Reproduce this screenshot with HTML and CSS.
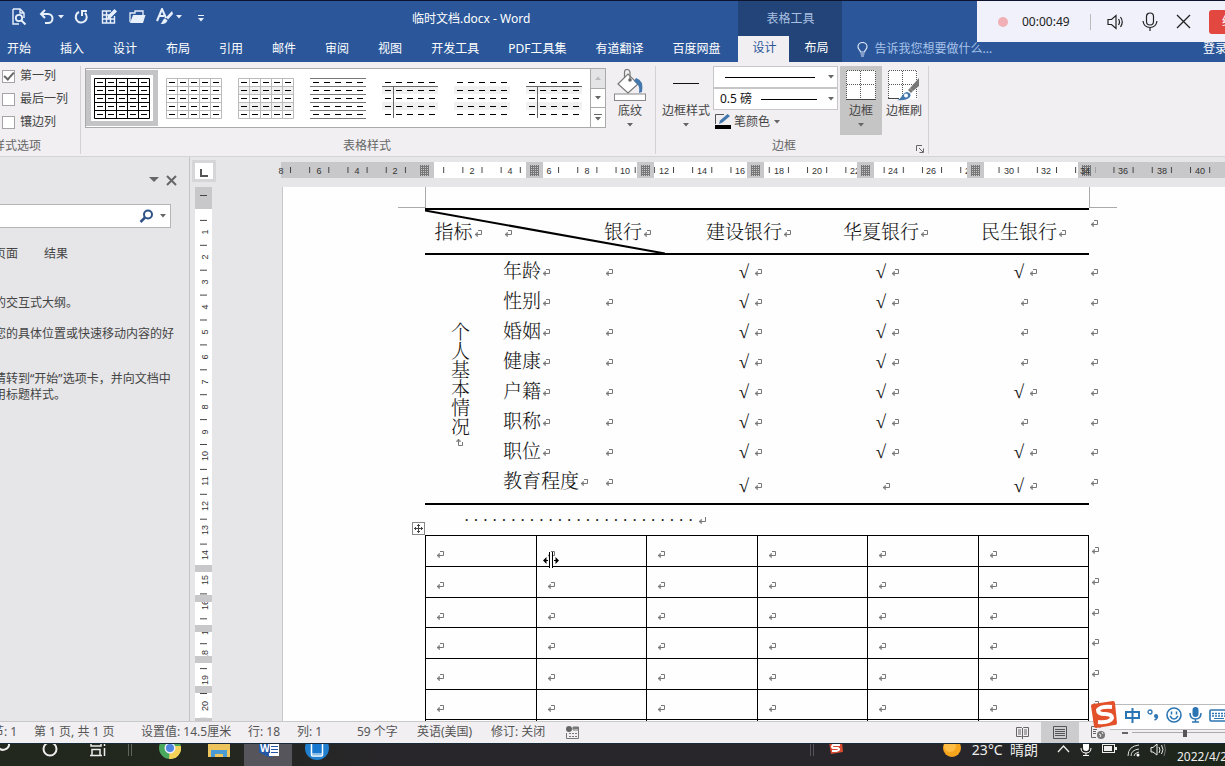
FILE: index.html
```html
<!DOCTYPE html>
<html lang="zh-CN">
<head>
<meta charset="utf-8">
<title>临时文档.docx - Word</title>
<link rel="stylesheet" href="styles.css">
</head>
<body>
<svg class="defs" aria-hidden="true">
  <symbol id="pm" viewBox="0 0 8 8"><path d="M4 .5h3.5v4H1M3.2 2v5M2.2 3v3" fill="none" stroke="#777"/></symbol>
  <symbol id="enter" viewBox="0 0 8 8"><path d="M7.5 0v4.5H1M3.2 2v5M2.2 3v3" fill="none" stroke="#777"/></symbol>
  <symbol id="dashes" viewBox="0 0 56 41"><path d="M3 4.5h53M3 12.5h53M3 20.5h53M3 28.5h53M3 36.5h53" stroke="#000" stroke-dasharray="6 5" fill="none" stroke-width="1"/></symbol>
  <symbol id="gridlines" viewBox="0 0 56 41"><path d="M.5 .5h55v40H.5zM0 8.5h56M0 16.5h56M0 24.5h56M0 32.5h56M11.5 0v41M22.5 0v41M33.5 0v41M44.5 0v41" fill="none" stroke="currentColor"/></symbol>
  <symbol id="down" viewBox="0 0 6 4"><path d="M0 0h6L3 3.5z" fill="currentColor"/></symbol>
</svg>

<header class="titlebar">
  <div class="main-head">
    <div class="title-row">
      <div class="qat">
        <button aria-label="打印预览"><svg width="16" height="18" viewBox="0 0 16 18"><path d="M2 1h7l4 4v5M2 1v15h6M9 1v4h4" fill="none" stroke="#e8f0fb" stroke-width="1.4"/><circle cx="8" cy="10" r="3.2" fill="none" stroke="#e8f0fb" stroke-width="1.8"/><path d="M10.500 12.500l4 4" stroke="#e8f0fb" stroke-width="2"/></svg></button>
        <button aria-label="撤消" class="undo"><svg width="16" height="16" viewBox="0 0 16 16"><path d="M6 1L2 5l4 4M2 5h7a4 4 0 0 1 0 9H6" fill="none" stroke="#e8f0fb" stroke-width="2"/></svg><svg class="caret"><use href="#down"/></svg></button>
        <button aria-label="重复"><svg width="15" height="16" viewBox="0 0 15 16"><path d="M5 3a5.500 5.500 0 1 0 6 1M8 7V2h5" fill="none" stroke="#e8f0fb" stroke-width="2"/></svg></button>
        <button aria-label="绘制表格"><svg width="16" height="16" viewBox="0 0 16 16"><path d="M10 2H1.500v12h12V7M1.500 6h7M1.500 10h12M5.500 2v12M9.500 9v5" fill="none" stroke="#e8f0fb" stroke-width="1.400"/><path d="M6 10.500l1-4L13.500 0 16 2.500 9.500 9z" fill="#e8f0fb"/></svg></button>
        <button aria-label="打开"><svg width="17" height="16" viewBox="0 0 17 16"><path d="M1 13V4h5V2h8v5" fill="none" stroke="#e8f0fb" stroke-width="1.300"/><path d="M4 6h12.500L14 14H1z" fill="#e8f0fb"/></svg></button>
        <button aria-label="格式" class="style-brush"><svg width="17" height="17" viewBox="0 0 17 17"><path d="M1 13L6 1l4 9M3 8h5" fill="none" stroke="#e8f0fb" stroke-width="2"/><path d="M16 3l-6 6.500 2 2L17 6zM9 10.500l2.500 2c-1 3-4 3.500-7 3.500 2-1 2-5 4.500-5.500z" fill="#e8f0fb"/></svg><svg class="caret"><use href="#down"/></svg></button>
        <button aria-label="自定义快速访问工具栏"><svg width="6" height="8" viewBox="0 0 6 8"><path d="M0 .5h6" stroke="#e8f0fb"/><path d="M0 3h6L3 6.500z" fill="#e8f0fb"/></svg></button>
      </div>
      <h1>临时文档.docx - Word</h1>
    </div>
    <nav class="tabs">
      <a href="#">开始</a><a href="#">插入</a><a href="#">设计</a><a href="#">布局</a><a href="#">引用</a><a href="#">邮件</a><a href="#">审阅</a><a href="#">视图</a><a href="#">开发工具</a><a href="#">PDF工具集</a><a href="#">有道翻译</a><a href="#">百度网盘</a>
    </nav>
  </div>
  <div class="context">
    <div class="context-title">表格工具</div>
    <nav class="context-tabs"><a href="#" class="active">设计</a><a href="#">布局</a></nav>
  </div>
  <div class="tell">
    <a href="#" class="ask"><svg width="11" height="15" viewBox="0 0 11 15"><path d="M3.500 10C3.500 8 1 7.500 1 4.800a4.500 4.300 0 0 1 9 0C10 7.500 7.500 8 7.500 10zM3.500 12h4M4 14h3" fill="none" stroke="#dbe7f8" stroke-width="1.200"/></svg>告诉我您想要做什么...</a>
    <a href="#" class="login">登录</a>
  </div>
</header>

<aside class="recorder">
  <span class="rec-dot"></span><time>00:00:49</time><span class="rec-sep"></span>
  <button aria-label="声音"><svg width="17" height="16" viewBox="0 0 17 16"><path d="M1 5.500h3.500L9 1.500v13L4.500 10.500H1zM11.500 5q2 3 0 6M13.500 3q3.500 5 0 10" fill="none" stroke="#222" stroke-width="1.200"/></svg></button>
  <button aria-label="麦克风"><svg width="16" height="19" viewBox="0 0 16 19"><rect x="4.500" y="1" width="7" height="12" rx="3.500" fill="none" stroke="#222" stroke-width="1.200"/><path d="M1 9q1 6.500 7 6.500T15 9M8 15.500V19" fill="none" stroke="#222" stroke-width="1.200"/></svg></button>
  <button aria-label="关闭"><svg width="15" height="15" viewBox="0 0 15 15"><path d="M1 1l13 13M14 1L1 14" stroke="#222" stroke-width="1.300"/></svg></button>
  <button class="rec-stop">结束</button>
</aside>

<section class="ribbon">
  <div class="group options">
    <div class="group-body checks">
      <label><input type="checkbox" checked>第一列</label>
      <label><input type="checkbox">最后一列</label>
      <label><input type="checkbox">镶边列</label>
    </div>
    <div class="group-label">样式选项</div>
  </div>
  <div class="group styles">
    <div class="group-body">
      <div class="gallery">
        <button class="thumb selected" aria-label="网格型"><svg><use href="#gridlines"/><use href="#dashes"/></svg></button>
        <button class="thumb pale" aria-label="网格型浅色"><svg><use href="#gridlines"/><use href="#dashes"/></svg></button>
        <button class="thumb pale" aria-label="普通表格 1"><svg><path d="M0 8h56v8H0zM0 24h56v8H0z" fill="#f1f1f1"/><use href="#gridlines"/><use href="#dashes"/></svg></button>
        <button class="thumb" aria-label="普通表格 2"><svg><path d="M0 .5h56M0 8.500h56M0 16.500h56M0 24.500h56M0 32.500h56M0 40.500h56" stroke="#777"/><use href="#dashes"/></svg></button>
        <button class="thumb" aria-label="普通表格 3"><svg><path d="M0 9h56v7H0zM0 24h56v8H0z" fill="#f1f1f1"/><path d="M0 8.500h56M11.500 9v31" stroke="#666"/><use href="#dashes"/></svg></button>
        <button class="thumb" aria-label="普通表格 4"><svg><path d="M0 8h56v8H0zM0 24h56v8H0z" fill="#f1f1f1"/><use href="#dashes"/></svg></button>
        <button class="thumb" aria-label="普通表格 5"><svg><path d="M0 9h56v7H0zM0 24h56v8H0z" fill="#f1f1f1"/><path d="M0 8.500h56M11.500 9v31" stroke="#666"/><use href="#dashes"/></svg></button>
        <div class="gallery-nav">
          <button disabled aria-label="上一行"><svg class="caret up"><use href="#down"/></svg></button>
          <button aria-label="下一行"><svg class="caret"><use href="#down"/></svg></button>
          <button aria-label="其他"><svg width="8" height="7" viewBox="0 0 8 7"><path d="M0 .5h8" stroke="#666"/><path d="M1 3h6L4 6.500z" fill="#666"/></svg></button>
        </div>
      </div>
      <button class="big shading">
        <svg width="32" height="32" viewBox="0 0 32 32"><path d="M4 15L14 5l10 10-10 9z" fill="#fff" stroke="#777" stroke-width="1.200"/><path d="M10.500 9V3q0-2.500 2.500-2.500T16 3v8" fill="none" stroke="#777" stroke-width="1.200"/><circle cx="16" cy="11" r="1.800" fill="#666"/><path d="M22 9q8 2 6 14l-3 1q1-7-2-9l-3-3z" fill="#4478ad"/><rect x=".5" y="25" width="31" height="6.500" fill="#fff" stroke="#888"/></svg>
        <span>底纹</span><svg class="caret"><use href="#down"/></svg>
      </button>
    </div>
    <div class="group-label">表格样式</div>
  </div>
  <div class="group borders">
    <div class="group-body">
      <button class="big border-style"><svg width="26" height="32" viewBox="0 0 26 32"><path d="M0 14.500h26" stroke="#111"/></svg><span>边框样式</span><svg class="caret"><use href="#down"/></svg></button>
      <div class="pen">
        <div class="combo"><select aria-label="笔样式"><option></option></select><span class="rule long"></span><svg class="caret"><use href="#down"/></svg></div>
        <div class="combo"><select aria-label="笔划粗细"><option>0.5 磅</option></select><span class="rule"></span><svg class="caret"><use href="#down"/></svg></div>
        <button class="pen-color"><svg width="16" height="16" viewBox="0 0 16 16"><path d="M9 .5H.5V10" fill="none" stroke="#555"/><path d="M4 10l1-3.500L12.500 0 15 2 7.500 8.500z" fill="#4478ad"/><rect y="11" width="16" height="4" fill="#000"/></svg>笔颜色<svg class="caret"><use href="#down"/></svg></button>
      </div>
      <button class="big pressed"><svg width="30" height="30" viewBox="0 0 30 30"><rect x=".5" y=".5" width="29" height="29" fill="#fff"/><path d="M1 .5h28M1 14.500h28M.5 1v28M14.500 1v28M29.500 1v28" stroke="#555" stroke-dasharray="1 1" fill="none"/><path d="M0 29.500h30" stroke="#444"/></svg><span>边框</span><svg class="caret"><use href="#down"/></svg></button>
      <button class="big painter"><svg width="32" height="30" viewBox="0 0 32 30"><rect x=".5" y=".5" width="29" height="29" fill="#fff"/><path d="M1 .5h28M1 14.500h28M.5 1v28M14.500 1v28M28.500 1v28" stroke="#555" stroke-dasharray="1 1" fill="none"/><path d="M0 28.500h11" stroke="#444"/><path d="M31 8v8l-6 5-3-3z" fill="#777"/><path d="M20 20l2-2 3 3-2 2z" fill="#777"/><path d="M9 30c5-1 5-7 10-8q5 1 3 5-4 4-13 3z" fill="#4478ad"/><circle cx="18" cy="25.500" r="2" fill="#fff"/></svg><span>边框刷</span></button>
    </div>
    <div class="group-label">边框<button class="launcher" aria-label="边框和底纹"><svg width="8" height="8" viewBox="0 0 8 8"><path d="M.5 6V.5H6M3 3l4 4M7.500 3.500v4h-4" fill="none" stroke="#666"/></svg></button></div>
  </div>
</section>

<main class="workspace">
  <aside class="pane">
    <div class="pane-tools">
      <button aria-label="任务窗格选项"><svg width="10" height="6" viewBox="0 0 10 6"><path d="M0 0h10L5 5z" fill="#666"/></svg></button>
      <button aria-label="关闭"><svg width="11" height="11" viewBox="0 0 11 11"><path d="M1 1l9 9M10 1l-9 9" stroke="#666" stroke-width="2"/></svg></button>
    </div>
    <div class="search"><input type="text" aria-label="搜索文档"><svg width="15" height="15" viewBox="0 0 15 15"><circle cx="9" cy="5.500" r="4" fill="none" stroke="#2f5287" stroke-width="2"/><path d="M6 8.500L1.500 13" stroke="#2f5287" stroke-width="2.500"/></svg><svg class="caret"><use href="#down"/></svg></div>
    <div class="pane-text">
      <nav><a href="#">页面</a><a href="#">结果</a></nav>
      <p>的交互式大纲。</p>
      <p>您的具体位置或快速移动内容的好</p>
      <p>请转到<span class="latin">“</span>开始<span class="latin">”</span>选项卡，并向文档中<br>用标题样式。</p>
    </div>
  </aside>
  <div class="editor">
    <div class="top-ruler">
      <button class="tab-kind" aria-label="左对齐制表符"><svg width="8" height="8" viewBox="0 0 8 8"><path d="M1 0v7h7" fill="none" stroke="#555" stroke-width="2"/></svg></button>
      <svg class="hruler" height="16">
        <defs>
          <pattern id="tick" x="9" width="19.150" height="16" patternUnits="userSpaceOnUse"><path d="M.5 5v6" stroke="#444"/></pattern>
          <pattern id="mesh" width="2" height="2" patternUnits="userSpaceOnUse"><path d="M0 .5h2M.5 0v2" stroke="#777"/></pattern>
          <g id="stop"><rect x="-8" width="17" height="16" fill="#c8c7c9"/><rect x="-4" y="3" width="9" height="11" fill="url(#mesh)"/></g>
        </defs>
        <rect width="100%" height="16" fill="#c8c7c9"/>
        <rect x="153" width="645" height="16" fill="#fff"/>
        <rect x="9" width="934" height="16" fill="url(#tick)"/>
        <g class="nums">
          <text x="0" y="12">8</text><text x="38" y="12">6</text><text x="76" y="12">4</text><text x="114" y="12">2</text><text x="191" y="12">2</text><text x="229" y="12">4</text><text x="268" y="12">6</text><text x="306" y="12">8</text><text x="344" y="12">10</text><text x="383" y="12">12</text><text x="421" y="12">14</text><text x="459" y="12">16</text><text x="498" y="12">18</text><text x="536" y="12">20</text><text x="574" y="12">22</text><text x="612" y="12">24</text><text x="650" y="12">26</text><text x="689" y="12">28</text><text x="728" y="12">30</text><text x="765" y="12">32</text>
        </g>
        <use href="#stop" x="143"/><use href="#stop" x="253"/><use href="#stop" x="364"/><use href="#stop" x="474"/><use href="#stop" x="584"/><use href="#stop" x="694"/><use href="#stop" x="805"/>
        <g class="nums"><text x="804" y="12">34</text><text x="842" y="12">36</text><text x="881" y="12">38</text><text x="919" y="12">40</text></g>
      </svg>
    </div>
    <div class="canvas">
      <svg class="vruler" width="17" height="534">
        <defs><pattern id="vtick" y="8" width="17" height="24.900" patternUnits="userSpaceOnUse"><path d="M5 .5h7" stroke="#444"/></pattern></defs>
        <rect width="17" height="534" fill="#fff"/><rect width="17" height="22" fill="#c8c7c9"/>
        <rect y="6" width="17" height="528" fill="url(#vtick)"/>
        <g class="nums">
          <text transform="translate(13 45) rotate(-90)">1</text><text transform="translate(13 70) rotate(-90)">2</text><text transform="translate(13 95) rotate(-90)">3</text><text transform="translate(13 120) rotate(-90)">4</text><text transform="translate(13 145) rotate(-90)">5</text><text transform="translate(13 170) rotate(-90)">6</text><text transform="translate(13 195) rotate(-90)">7</text><text transform="translate(13 220) rotate(-90)">8</text><text transform="translate(13 245) rotate(-90)">9</text><text transform="translate(13 269) rotate(-90)">10</text><text transform="translate(13 294) rotate(-90)">11</text><text transform="translate(13 319) rotate(-90)">12</text><text transform="translate(13 343) rotate(-90)">13</text><text transform="translate(13 368) rotate(-90)">14</text><text transform="translate(13 393) rotate(-90)">15</text><text transform="translate(13 418) rotate(-90)">16</text><text transform="translate(13 443) rotate(-90)">17</text><text transform="translate(13 468) rotate(-90)">18</text><text transform="translate(13 493) rotate(-90)">19</text><text transform="translate(13 519) rotate(-90)">20</text>
        </g>
        <path d="M0 378h17v7H0zM0 408h17v7H0zM0 438h17v7H0zM0 469h17v7H0zM0 499h17v7H0zM0 531h17v3H0z" fill="#c8c7c9"/>
      </svg>
      <article class="page">
        <div class="crops"><span class="crop left"></span><span class="crop right"></span></div>
        <table class="banks">
          <colgroup><col class="c0"><col class="c1"><col class="c2"><col class="c3"><col class="c3"><col class="c5"><col class="cend"></colgroup>
          <tr class="head"><th class="corner"><svg class="slash" width="240" height="45" viewBox="0 0 240 45"><path d="M0 1.500L240 44.500" stroke="#000" stroke-width="2"/></svg>指标<svg class="pm"><use href="#pm"/></svg></th><th class="item"><svg class="pm"><use href="#pm"/></svg></th><th class="blank">银行<svg class="pm"><use href="#pm"/></svg></th><th>建设银行<svg class="pm"><use href="#pm"/></svg></th><th>华夏银行<svg class="pm"><use href="#pm"/></svg></th><th>民生银行<svg class="pm"><use href="#pm"/></svg></th><td class="end"><svg class="pm"><use href="#pm"/></svg></td></tr>
          <tr><th rowspan="8" class="side"><span>个人基本情况<svg class="pm turned"><use href="#pm"/></svg></span></th><th class="item">年龄<svg class="pm"><use href="#pm"/></svg></th><td class="blank"><svg class="pm"><use href="#pm"/></svg></td><td><b>√</b><svg class="pm"><use href="#pm"/></svg></td><td><b>√</b><svg class="pm"><use href="#pm"/></svg></td><td><b>√</b><svg class="pm"><use href="#pm"/></svg></td><td class="end"><svg class="pm"><use href="#pm"/></svg></td></tr>
          <tr><th class="item">性别<svg class="pm"><use href="#pm"/></svg></th><td class="blank"><svg class="pm"><use href="#pm"/></svg></td><td><b>√</b><svg class="pm"><use href="#pm"/></svg></td><td><b>√</b><svg class="pm"><use href="#pm"/></svg></td><td><svg class="pm"><use href="#pm"/></svg></td><td class="end"><svg class="pm"><use href="#pm"/></svg></td></tr>
          <tr><th class="item">婚姻<svg class="pm"><use href="#pm"/></svg></th><td class="blank"><svg class="pm"><use href="#pm"/></svg></td><td><b>√</b><svg class="pm"><use href="#pm"/></svg></td><td><b>√</b><svg class="pm"><use href="#pm"/></svg></td><td><svg class="pm"><use href="#pm"/></svg></td><td class="end"><svg class="pm"><use href="#pm"/></svg></td></tr>
          <tr><th class="item">健康<svg class="pm"><use href="#pm"/></svg></th><td class="blank"><svg class="pm"><use href="#pm"/></svg></td><td><b>√</b><svg class="pm"><use href="#pm"/></svg></td><td><b>√</b><svg class="pm"><use href="#pm"/></svg></td><td><svg class="pm"><use href="#pm"/></svg></td><td class="end"><svg class="pm"><use href="#pm"/></svg></td></tr>
          <tr><th class="item">户籍<svg class="pm"><use href="#pm"/></svg></th><td class="blank"><svg class="pm"><use href="#pm"/></svg></td><td><b>√</b><svg class="pm"><use href="#pm"/></svg></td><td><b>√</b><svg class="pm"><use href="#pm"/></svg></td><td><b>√</b><svg class="pm"><use href="#pm"/></svg></td><td class="end"><svg class="pm"><use href="#pm"/></svg></td></tr>
          <tr><th class="item">职称<svg class="pm"><use href="#pm"/></svg></th><td class="blank"><svg class="pm"><use href="#pm"/></svg></td><td><b>√</b><svg class="pm"><use href="#pm"/></svg></td><td><b>√</b><svg class="pm"><use href="#pm"/></svg></td><td><svg class="pm"><use href="#pm"/></svg></td><td class="end"><svg class="pm"><use href="#pm"/></svg></td></tr>
          <tr><th class="item">职位<svg class="pm"><use href="#pm"/></svg></th><td class="blank"><svg class="pm"><use href="#pm"/></svg></td><td><b>√</b><svg class="pm"><use href="#pm"/></svg></td><td><b>√</b><svg class="pm"><use href="#pm"/></svg></td><td><b>√</b><svg class="pm"><use href="#pm"/></svg></td><td class="end"><svg class="pm"><use href="#pm"/></svg></td></tr>
          <tr class="last"><th class="item">教育程度<svg class="pm"><use href="#pm"/></svg></th><td class="blank"><svg class="pm"><use href="#pm"/></svg></td><td><b>√</b><svg class="pm"><use href="#pm"/></svg></td><td><svg class="pm"><use href="#pm"/></svg></td><td><b>√</b><svg class="pm"><use href="#pm"/></svg></td><td class="end"><svg class="pm"><use href="#pm"/></svg></td></tr>
        </table>
        <p class="spaces">· · · · · · · · · · · · · · · · · · · · · · · · · <svg class="pm"><use href="#enter"/></svg></p>
        <div class="grid-wrap">
          <svg class="mover" width="13" height="13" viewBox="0 0 13 13"><rect x=".5" y=".5" width="12" height="12" fill="#fff" stroke="#888"/><path d="M6.500 2v9M2 6.500h9M5 3.500h3M5 9.500h3M3.500 5v3M9.500 5v3" stroke="#444"/></svg>
          <svg class="cursor" width="16" height="17" viewBox="0 0 16 17"><path d="M8 0v17" stroke="#fff" stroke-width="2"/><path d="M6.500 0v16M9.500 0v16M1 8.500h4M11 8.500h4" stroke="#000"/><path d="M0 8.500L3.500 5v7zM16 8.500L12.500 5v7z" fill="#000"/></svg>
          <table class="blank-grid">
            <tr><td><svg class="pm"><use href="#pm"/></svg></td><td><svg class="pm"><use href="#pm"/></svg></td><td><svg class="pm"><use href="#pm"/></svg></td><td><svg class="pm"><use href="#pm"/></svg></td><td><svg class="pm"><use href="#pm"/></svg></td><td><svg class="pm"><use href="#pm"/></svg></td><td class="end"><svg class="pm"><use href="#pm"/></svg></td></tr>
            <tr><td><svg class="pm"><use href="#pm"/></svg></td><td><svg class="pm"><use href="#pm"/></svg></td><td><svg class="pm"><use href="#pm"/></svg></td><td><svg class="pm"><use href="#pm"/></svg></td><td><svg class="pm"><use href="#pm"/></svg></td><td><svg class="pm"><use href="#pm"/></svg></td><td class="end"><svg class="pm"><use href="#pm"/></svg></td></tr>
            <tr><td><svg class="pm"><use href="#pm"/></svg></td><td><svg class="pm"><use href="#pm"/></svg></td><td><svg class="pm"><use href="#pm"/></svg></td><td><svg class="pm"><use href="#pm"/></svg></td><td><svg class="pm"><use href="#pm"/></svg></td><td><svg class="pm"><use href="#pm"/></svg></td><td class="end"><svg class="pm"><use href="#pm"/></svg></td></tr>
            <tr><td><svg class="pm"><use href="#pm"/></svg></td><td><svg class="pm"><use href="#pm"/></svg></td><td><svg class="pm"><use href="#pm"/></svg></td><td><svg class="pm"><use href="#pm"/></svg></td><td><svg class="pm"><use href="#pm"/></svg></td><td><svg class="pm"><use href="#pm"/></svg></td><td class="end"><svg class="pm"><use href="#pm"/></svg></td></tr>
            <tr><td><svg class="pm"><use href="#pm"/></svg></td><td><svg class="pm"><use href="#pm"/></svg></td><td><svg class="pm"><use href="#pm"/></svg></td><td><svg class="pm"><use href="#pm"/></svg></td><td><svg class="pm"><use href="#pm"/></svg></td><td><svg class="pm"><use href="#pm"/></svg></td><td class="end"><svg class="pm"><use href="#pm"/></svg></td></tr>
            <tr><td><svg class="pm"><use href="#pm"/></svg></td><td><svg class="pm"><use href="#pm"/></svg></td><td><svg class="pm"><use href="#pm"/></svg></td><td><svg class="pm"><use href="#pm"/></svg></td><td><svg class="pm"><use href="#pm"/></svg></td><td><svg class="pm"><use href="#pm"/></svg></td><td class="end"><svg class="pm"><use href="#pm"/></svg></td></tr>
            <tr><td></td><td></td><td></td><td></td><td></td><td></td><td class="end"></td></tr>
          </table>
        </div>
      </article>
    </div>
  </div>
</main>

<footer class="status">
  <span class="s-sec">节: 1</span><span class="s-page">第 1 页, 共 1 页</span><span class="s-at">设置值: 14.5厘米</span><span class="s-line">行: 18</span><span class="s-col">列: 1</span><span class="s-words">59 个字</span><span class="s-lang">英语(美国)</span><span class="s-track">修订: 关闭</span>
  <svg width="13" height="13" viewBox="0 0 13 13"><circle cx="3" cy="3" r="3" fill="#666"/><path d="M7 1h5.500v3H7zM.5 7v5.500h12V4" fill="none" stroke="#777"/><path d="M7 2h5" stroke="#777" stroke-width="2"/><path d="M3 7.500h8M3 10.500h8" stroke="#777" stroke-dasharray="2 1"/></svg>
  <div class="views">
    <button aria-label="阅读视图"><svg width="13" height="13" viewBox="0 0 13 13"><path d="M.5 1.500h5l1 1 1-1h5v9h-5l-1 1-1-1h-5zM6.500 2v11M2 4h3M2 6h3M2 8h3M8 4h3M8 6h3M8 8h3" fill="none" stroke="#666"/></svg></button>
    <button class="current" aria-label="页面视图"><svg width="14" height="13" viewBox="0 0 14 13"><path d="M.5 .5h13v12H.5zM2 3.500h10M2 5.500h10M2 7.500h10M2 9.500h10" fill="none" stroke="#555"/></svg></button>
    <button aria-label="Web 版式视图"><svg width="14" height="14" viewBox="0 0 14 14"><path d="M9 2V.5H.5v11H5M2 3.500h4M2 5.500h3M2 7.500h3" fill="none" stroke="#666"/><circle cx="10" cy="9" r="4" fill="#777"/><path d="M8 8l2 1-1 2M11 6l1 2" stroke="#eee" fill="none"/></svg></button>
  </div>
  <button class="minus" aria-label="缩小"></button>
  <input type="range" class="zoom" aria-label="显示比例" value="50">
</footer>

<footer class="taskbar">
  <svg class="t-search" width="10" height="23"><path d="M-2 3a6 6 0 0 0 11-4M-1 4l-3 3" fill="none" stroke="#eee" stroke-width="2"/></svg>
  <svg class="t-cortana" width="18" height="23"><circle cx="9" cy="5" r="6.500" fill="none" stroke="#eee" stroke-width="2"/></svg>
  <svg class="t-view" width="17" height="23"><path d="M1 0v2h10V0M2 5.500h8v6H2zM0 11.500h12M14.500 0v2M14.500 4v8" fill="none" stroke="#eee" stroke-width="1.500"/></svg>
  <svg class="t-sep" width="4" height="23"><path d="M.5 0v12M3.500 0v12" stroke="#62655d"/></svg>
  <svg class="t-chrome" width="22" height="23"><circle cx="11" cy="4" r="11" fill="#4aa85c"/><path d="M11 4l5-2h6a11 11 0 0 1-12 13z" fill="#f6d158"/><circle cx="11" cy="4" r="5.500" fill="#e9eefa"/><circle cx="11" cy="4" r="4" fill="#4e83df"/></svg>
  <svg class="t-files" width="22" height="23"><path d="M0 0h22v13H0z" fill="#eec45c"/><path d="M3 13V6h16v7h-4v-3H7v3z" fill="#4a9bd3"/></svg>
  <div class="t-word"><svg width="22" height="23"><path d="M0 0h13v13Q6 13 1 8z" fill="#2458a6"/><path d="M10 0h10v12H10z" fill="#fff"/><path d="M12 2.500h7M12 5.500h7M12 8.500h7" stroke="#2458a6"/><path d="M0 0h11v9H0z" fill="#2458a6"/><text x="1" y="8">W</text></svg></div>
  <svg class="t-phone" width="24" height="23"><circle cx="12" cy="4" r="12" fill="#2180cf"/><rect x="6.500" y="-4" width="11" height="16" rx="1" fill="#1679cf" stroke="#fff" stroke-width="1.500"/><path d="M7 10h10" stroke="#fff"/></svg>
  <div class="tray">
    <svg class="t-sep" width="4" height="23"><path d="M.5 0v12M3.500 0v12" stroke="#56545a"/></svg>
    <svg class="t-sogou" width="16" height="23"><path d="M1-2h13l1 10-12 2z" fill="#d94c32"/><path d="M12 1H5q-2 2 0 3h5q3 2-2 3H4" fill="none" stroke="#fff" stroke-width="2"/></svg>
    <svg class="t-sun" width="20" height="23"><circle cx="10" cy="4" r="9" fill="#f7a51f"/><circle cx="8" cy="2" r="6" fill="#ffbd46"/></svg>
    <span class="weather">23°C&nbsp; 晴朗</span>
    <svg width="13" height="23"><path d="M1 8l5.500-6L12 8" fill="none" stroke="#eee" stroke-width="1.300"/></svg>
    <svg width="12" height="23"><rect x="3" y="-3" width="6" height="10" rx="3" fill="#fff"/><path d="M1 4q0 5 5 5t5-5M6 9v3M3 11.500h6" fill="none" stroke="#fff"/></svg>
    <svg width="15" height="23"><rect x=".5" y=".5" width="12" height="8" fill="none" stroke="#eee"/><path d="M2 2h8v5H2zM13 3h2v3h-2z" fill="#eee"/></svg>
    <svg width="13" height="23"><path d="M1 12Q1 2 12 1M4 12q0-6 8-7M7 12q0-3 5-4" fill="none" stroke="#ddd"/><circle cx="11" cy="11" r="1.500" fill="#fff"/></svg>
    <svg width="17" height="23"><path d="M1 3.500h2L7 0v11L3 8H1zM9 3q2 3 0 6M11.500 1q3 5 0 9" fill="none" stroke="#eee"/><path d="M14-1q3 7 0 13" fill="none" stroke="#777"/></svg>
    <span class="date">2022/4/23</span>
  </div>
</footer>

<aside class="ime">
  <svg class="ime-logo" width="28" height="28" viewBox="0 0 28 28"><path d="M3 3L23 0q2 0 2 2l2 20q0 2-2 2L6 27q-2 0-2-2L1 5q0-2 2-2z" fill="#e2512a"/><path d="M22 6q-11-1-14 3 0 4 7 4t7 4q-2 5-14 4" fill="none" stroke="#fff" stroke-width="4"/></svg>
  <button aria-label="中文"><svg width="15" height="15" viewBox="0 0 15 15"><path d="M1 4h13v6H1zM7.500 0v15" fill="none" stroke="#2c75b3" stroke-width="2"/></svg></button>
  <button aria-label="标点"><svg width="12" height="12" viewBox="0 0 12 12"><circle cx="3" cy="3" r="2" fill="none" stroke="#2c75b3" stroke-width="1.300"/><circle cx="9" cy="7" r="2" fill="#2c75b3"/><path d="M10.500 7q0 3-3 4" fill="none" stroke="#2c75b3" stroke-width="1.500"/></svg></button>
  <button aria-label="表情"><svg width="16" height="16" viewBox="0 0 16 16"><circle cx="8" cy="8" r="7" fill="none" stroke="#2c75b3" stroke-width="1.600"/><path d="M4 9q4 6 8 0M5.500 4.500v3M10.500 4.500v3" fill="none" stroke="#2c75b3" stroke-width="1.500"/></svg></button>
  <button aria-label="语音"><svg width="13" height="16" viewBox="0 0 13 16"><rect x="3.500" width="6" height="10" rx="3" fill="#2c75b3"/><path d="M1 6q0 6 5.500 6T12 6M6.500 12v3M3 15h7" fill="none" stroke="#2c75b3" stroke-width="1.500"/></svg></button>
  <button aria-label="键盘"><svg width="20" height="13" viewBox="0 0 20 13"><rect x="1" y="1" width="18" height="11" rx="1" fill="none" stroke="#2c75b3" stroke-width="1.600"/><path d="M3 4.500h14M3 7h14" stroke="#2c75b3" stroke-width="1.500" stroke-dasharray="2 1"/><path d="M5 9.500h10" stroke="#2c75b3"/></svg></button>
</aside>
</body>
</html>
```
FILE: styles.css
```css
* { box-sizing: border-box; }
body {
  margin: 0; height: 100vh; overflow: hidden; position: relative;
  display: flex; flex-direction: column;
  font: 12px/16px "Noto Sans", "Noto Sans CJK SC", sans-serif; color: #444;
  background: #e6e6e8;
}
button { border: 0; padding: 0; margin: 0; background: none; font: inherit; color: inherit; display: flex; align-items: center; }
a { color: inherit; text-decoration: none; white-space: nowrap; }
svg { flex: none; display: block; }
.defs { position: absolute; width: 0; height: 0; }
.caret { width: 6px; height: 4px; color: #666; }

/* title bar and tabs */
.titlebar { flex: none; height: 62px; display: flex; background: #2b579a; color: #fff; border-top: 1px solid #0c1430; overflow: hidden; }
.main-head { flex: none; display: flex; flex-direction: column; }
.title-row { height: 35px; display: flex; align-items: center; }
.qat { width: 412px; display: flex; align-items: center; gap: 12px; padding-left: 11px; padding-bottom: 4px; }
.qat .caret { color: #e8f0fb; }
.undo { gap: 3px; margin-right: -2px; }
.style-brush { gap: 3px; margin-left: -2px; }
.qat > :last-child { margin: 4px 0 0 4px; }
h1 { margin: 0; font-size: 12px; font-weight: 400; }
.tabs { height: 26px; display: flex; align-items: center; gap: 29px; padding: 0 18px 1px 7px; }
.context { flex: none; background: #234478; }
.context-title { height: 35px; line-height: 36px; text-align: center; color: #a9c0e2; }
.context-tabs { display: flex; height: 26px; }
.context-tabs a { padding: 4px 14px 0 15px; }
.context-tabs .active { background: #f1eff2; color: #2b579a; padding: 4px 13px 0 14px; }
.tell { flex: 1; display: flex; align-items: flex-end; justify-content: space-between; padding: 0 0 5px 15px; }
.ask { display: flex; align-items: center; gap: 6px; color: #a9c3ea; }
.login { width: 22px; overflow: hidden; }

.recorder { position: absolute; top: 1px; right: 0; width: 248px; height: 41px; display: flex; align-items: center; background: #f0f1fb; color: #222; overflow: hidden; padding-left: 21px; }
.recorder > * { flex: none; }
.rec-dot { width: 10px; height: 10px; border-radius: 50%; background: #f1afb6; margin-right: 14px; }
.recorder time { width: 68px; }
.rec-sep { width: 1px; height: 16px; background: #bbb; margin-right: 16px; }
.recorder button { margin-right: 18px; }
.recorder .rec-stop { width: 56px; height: 24px; margin: 0; padding-left: 13px; border-radius: 3px; background: #e2483f; color: #fff; }

/* ribbon */
.ribbon { flex: none; height: 94px; display: flex; background: #f1eff2; padding-top: 4px; }
.group { display: flex; flex-direction: column; justify-content: space-between; border-right: 1px solid #d3d1d4; height: 88px; }
.group-body { display: flex; }
.group-label { height: 16px; text-align: center; color: #666; white-space: nowrap; position: relative; }
.options { flex: none; width: 81px; }
.options .group-label { width: 41px; display: flex; justify-content: flex-end; overflow: hidden; }
.checks { flex-direction: column; gap: 7px; padding: 2px 0 0 2px; }
.checks label { display: flex; align-items: center; gap: 5px; height: 16px; white-space: nowrap; }
.checks input { appearance: none; width: 13px; height: 13px; margin: 0; border: 1px solid #a5a3a6; background: #fff; display: grid; place-items: center; }
.checks input:checked::after { content: ""; width: 8px; height: 4px; border: solid #666; border-width: 0 0 2px 2px; transform: translateY(-1px) rotate(-48deg); }
.styles { flex: none; padding-left: 4px; width: 575px; }
.styles .group-label { padding-right: 6px; }
.gallery { display: flex; align-items: stretch; height: 60px; margin-top: 2px; border: 1px solid #aaa; background: #fff; }
.thumb { width: 72px; justify-content: center; color: #777; }
.thumb svg { width: 56px; height: 41px; }
.pale { color: #bbb; }
.selected { border: 5px solid #c4c3c5; margin: 1px 0; color: #000; }
.gallery-nav { width: 15px; display: flex; flex-direction: column; border-left: 1px solid #aaa; }
.gallery-nav button { flex: 1; justify-content: center; border-bottom: 1px solid #aaa; }
.gallery-nav button:last-child { border-bottom: 0; }
.gallery-nav button:disabled { background: #e4e3e5; }
.up { transform: rotate(180deg); color: #bbb; }
.big { flex-direction: column; width: 48px; height: 69px; padding-top: 3px; white-space: nowrap; }
.big > span { line-height: 16px; margin-bottom: 4px; }
.big > svg:first-child { margin-bottom: 2px; height: 32px; }
.borders { flex: none; width: 273px; }
.border-style { width: 52px; margin-left: 4px; }
.borders .group-body { gap: 1px; }
.pen { width: 125px; }
.combo { position: relative; height: 22px; display: flex; align-items: center; background: #fff; border: 1px solid #c6c5c7; }
.combo select { appearance: none; width: 100%; height: 100%; border: 0; background: none; padding: 0 6px; font: inherit; color: #111; }
.combo .caret { position: absolute; right: 3px; }
.rule { position: absolute; right: 20px; width: 56px; height: 1px; background: #000; }
.rule.long { width: 90px; right: 22px; }
.pen-color { gap: 3px; padding: 4px 0 0 2px; }
.pen-color .caret { margin-left: 1px; }
.pressed { width: 42px; margin-left: 1px; background: #c6c5c6; }
.painter { width: 42px; }
.launcher { position: absolute; right: 4px; bottom: 1px; }
.ribbon .borders .group-label { padding-right: 16px; }

/* navigation pane */
.workspace { flex: 1; min-height: 0; display: flex; overflow: hidden; border-top: 1px solid #d5d3d6; }
.pane { flex: none; width: 190px; border-right: 1px solid #c3c2c4; overflow: hidden; }
.pane-tools { display: flex; justify-content: flex-end; align-items: center; gap: 7px; padding: 17px 12px 0 0; height: 29px; }
.search { display: flex; align-items: center; gap: 6px; width: 171px; height: 24px; margin-top: 18px; padding-right: 4px; background: #fff; border: 1px solid #b5b4b6; border-left: 0; }
.search input { flex: 1; min-width: 0; border: 0; outline: 0; }
.pane-text { margin-left: -6px; }
.pane-text nav { display: flex; gap: 26px; margin: 18px 0 33px; }
.pane-text p { margin: 0 0 15px; white-space: nowrap; }
.pane-text p + p + p { margin-top: 29px; }
.latin { font-family: "Noto Sans"; }

/* rulers */
.editor { flex: 1; min-width: 0; display: flex; flex-direction: column; }
.top-ruler { flex: none; height: 30px; display: flex; padding-top: 5px; }
.tab-kind { flex: none; width: 24px; height: 22px; margin: -2px 0 0 2px; background: #fff; border: 3px solid #d6d5d7; justify-content: center; padding-top: 4px; }
.hruler { flex: 1; margin-left: 65px; overflow: visible; }
.nums text { font: 9px "Liberation Sans", sans-serif; fill: #333; text-anchor: middle; }
.canvas { flex: 1; min-height: 0; display: flex; overflow: hidden; }
.vruler { margin-left: 5px; }

/* document */
.page { flex: 1; margin-left: 70px; background: #fefefe; border-left: 1px solid #c6c5c7; font: 19px/30px "Liberation Serif", "Noto Serif CJK SC", "Noto Sans CJK SC", serif; font-weight: 300; color: #111; }
.crops { display: flex; gap: 663px; margin-left: 115px; height: 21px; }
.crop { flex: none; width: 28px; border-bottom: 1px solid #aaa; }
.crop.left { border-right: 1px solid #aaa; }
.crop.right { border-left: 1px solid #aaa; }
.pm { width: 8px; height: 8px; display: inline-block; vertical-align: 1px; margin-left: 1px; }
.banks { width: 684px; margin-left: 142px; table-layout: fixed; border-spacing: 0; line-height: 26px; }
.c0 { width: 66px; } .c1 { width: 107px; } .c2 { width: 82px; } .c3 { width: 137px; } .c5 { width: 135px; } .cend { width: 20px; }
.banks th, .banks td { padding: 4px 0 0; height: 30px; font-weight: 300; text-align: center; white-space: nowrap; }
.banks .head > * { height: 47px; padding-top: 2px; border-top: 2px solid #000; border-bottom: 2px solid #000; }
.banks .item { text-align: left; padding-left: 12px; }
.banks .blank { text-align: left; padding-left: 6px; }
.banks tr > :nth-last-child(2) { padding-left: 4px; }
.banks .last > * { height: 40px; border-bottom: 2px solid #000; }
.banks .side { border-bottom: 2px solid #000; padding-top: 16px; }
.banks .last .item, .banks .last .blank { vertical-align: top; }
.banks b { display: inline-block; width: 18px; font-weight: 400; }
.banks .end { border: 0; text-align: left; vertical-align: top; }
.corner { position: relative; }
.slash { position: absolute; left: 0; top: -1px; z-index: 1; }
.side span { writing-mode: vertical-rl; display: inline-block; line-height: 20px; }
.turned { transform: rotate(90deg); margin: 2px 0 0; }
.spaces { margin: 0; padding-left: 181px; height: 30px; font-size: 16px; line-height: 32px; }
.grid-wrap { position: relative; margin-left: 142px; }
.mover { position: absolute; left: -13px; top: -13px; }
.cursor { position: absolute; left: 118px; top: 17px; z-index: 1; }
.blank-grid { width: 684px; table-layout: fixed; border-collapse: collapse; line-height: 20px; }
.blank-grid td { height: 31px; padding: 8px 0 0 9px; border: 1px solid #000; vertical-align: top; }
.blank-grid tr:nth-child(3n) td { height: 30px; }
.blank-grid .end { width: 20px; border: 0; padding: 4px 0 0 1px; }

/* status bar */
.status { flex: none; height: 22px; display: flex; align-items: center; background: #f1eff2; border-top: 1px solid #c9c8ca; white-space: nowrap; overflow: hidden; color: #555; }
.status > span { flex: none; padding-bottom: 2px; }
.s-sec { width: 42px; margin-left: -8px; }
.s-page { width: 107px; }
.s-at { width: 107px; }
.s-line { width: 49px; }
.s-col { width: 60px; }
.s-words { width: 60px; }
.s-lang { width: 74px; }
.s-track { width: 75px; }
.views { display: flex; height: 100%; margin-left: auto; }
.views button { width: 38px; justify-content: center; }
.views .current { background: #cccbcd; }
.minus { flex: none; width: 6px; height: 2px; background: #666; margin: 0 4px 0 5px; }
.zoom { flex: none; appearance: none; width: 106px; height: 20px; margin: 0 -13px 0 0; background: linear-gradient(#aaa, #aaa) center / 100% 1px no-repeat; }
.zoom::-webkit-slider-thumb { appearance: none; width: 4px; height: 9px; background: #555; }

/* taskbar */
.taskbar { flex: none; height: 23px; display: flex; overflow: hidden; color: #eee; background: linear-gradient(90deg, #22281d, #23271f 18%, #28262b 32%, #28262b 78%, #1c2619); border-top: 1px solid #172a38; }
.t-cortana { margin-left: 31px; }
.t-view { margin-left: 31px; }
.t-sep { margin-left: 21px; }
.t-chrome { margin-left: 27px; }
.t-files { margin-left: 27px; }
.t-word { width: 48px; margin-left: 14px; padding-left: 15px; background: #56555b; }
.t-word text { font: 700 10px "Noto Sans", sans-serif; fill: #fff; }
.t-phone { margin-left: 13px; }
.tray { margin-left: auto; display: flex; gap: 10px; flex: none; }
.tray .t-sep { margin: 0; }
.t-sogou { margin-left: 4px; }
.t-sun { margin-left: 88px; }
.weather { font-size: 14px; line-height: 12px; white-space: nowrap; margin-right: 9px; }
.date { width: 48px; overflow: hidden; padding-top: 5px; }

.ime { position: absolute; right: 0; bottom: 36px; width: 135px; height: 30px; display: flex; align-items: center; gap: 7px; overflow: hidden; }
.ime::before { content: ""; position: absolute; left: 20px; right: 0; top: 4px; height: 24px; background: #fff; border: solid #bbb; border-width: 1px 0; }
.ime > * { flex: none; position: relative; }
```
